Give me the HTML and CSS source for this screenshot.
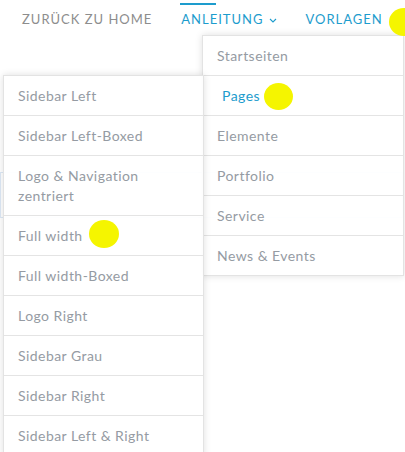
FILE: index.html
```html
<!doctype html>
<html lang="de">
<head>
    <meta charset="utf-8">
    <meta name="viewport" content="width=device-width, initial-scale=1.0">
    <title>Vorlagen</title>
    <link rel="stylesheet" href="styles.css">
</head>
<body>
    <div class="page">
        <nav class="topnav">
            <ul>
                <li><a href="#">Zurück zu Home</a></li>
                <li class="active">
                    <a href="#">Anleitung
                        <svg class="chevron" width="8" height="5" viewBox="0 0 8 5"><path d="M1 1l3 3 3-3" fill="none" stroke="currentColor" stroke-width="1.1"/></svg>
                    </a>
                </li>
                <li class="current"><a href="#">Vorlagen</a></li>
            </ul>
        </nav>
        <div class="content">
            <div class="search-box"></div>
        </div>

        <ul class="dropdown dropdown-main">
            <li><a href="#">Startseiten</a></li>
            <li class="hover"><a href="#">Pages</a></li>
            <li><a href="#">Elemente</a></li>
            <li><a href="#">Portfolio</a></li>
            <li><a href="#">Service</a></li>
            <li><a href="#">News &amp; Events</a></li>
        </ul>

        <ul class="dropdown dropdown-sub">
            <li><a href="#">Sidebar Left</a></li>
            <li><a href="#">Sidebar Left-Boxed</a></li>
            <li><a href="#">Logo &amp; Navigation zentriert</a></li>
            <li><a href="#">Full width</a></li>
            <li><a href="#">Full width-Boxed</a></li>
            <li><a href="#">Logo Right</a></li>
            <li><a href="#">Sidebar Grau</a></li>
            <li><a href="#">Sidebar Right</a></li>
            <li><a href="#">Sidebar Left &amp; Right</a></li>
        </ul>

        <span class="marker marker-top"></span>
        <span class="marker marker-pages"></span>
        <span class="marker marker-full"></span>
    </div>
</body>
</html>
```

FILE: styles.css
```css
body {
    font-family: Lato, "Open Sans", sans-serif;
    background-color: #fff;
    margin: 0;
    padding: 0;
}
.page {
    position: relative;
    width: 405px;
    height: 452px;
    overflow: hidden;
}
.topnav ul {
    list-style: none;
    margin: 0;
    padding: 9px 0 0 22px;
    display: flex;
    gap: 29px;
    height: 28px;
    white-space: nowrap;
}
.topnav li {
    position: relative;
    flex-shrink: 0;
}
.topnav a {
    display: flex;
    align-items: center;
    gap: 5px;
    font-size: 13px;
    line-height: 20px;
    letter-spacing: 1px;
    text-transform: uppercase;
    color: #8d8d8d;
    text-decoration: none;
}
.topnav .active a,
.topnav .current a {
    color: #1d9ccd;
}
.topnav .active::before {
    content: "";
    position: absolute;
    left: -1px;
    top: -6px;
    width: 36px;
    height: 2px;
    background-color: #1d9ccd;
}
.chevron {
    margin-top: 2px;
}
.content {
    padding-top: 135px;
}
.search-box {
    height: 44px;
    margin-right: 2px;
    border: 1px solid #dde9f6;
}
.dropdown {
    position: absolute;
    list-style: none;
    margin: 0;
    padding: 0;
    background-color: rgba(255, 255, 255, 0.93);
    border: 1px solid #e3e3e3;
    box-shadow: 0 0 7px rgba(0, 0, 0, 0.13);
}
.dropdown li {
    border-bottom: 1px solid #e4e4e4;
}
.dropdown li:last-child {
    border-bottom: none;
}
.dropdown a {
    display: block;
    padding: 10px 14px 9px;
    font-size: 14px;
    line-height: 20px;
    letter-spacing: 0.45px;
    color: #959ba3;
    text-decoration: none;
}
.dropdown .hover a {
    padding-left: 19px;
    color: #1d9ccd;
}
.dropdown-main {
    left: 202px;
    top: 35px;
    width: 200px;
}
.dropdown-sub {
    left: 3px;
    top: 75px;
    width: 199px;
}
.marker {
    position: absolute;
    border-radius: 50%;
    background-color: #f5f500;
}
.marker-top {
    left: 389px;
    top: 8px;
    width: 30px;
    height: 28px;
}
.marker-pages {
    left: 264px;
    top: 83px;
    width: 29px;
    height: 27px;
}
.marker-full {
    left: 89px;
    top: 220px;
    width: 30px;
    height: 28px;
}
```
